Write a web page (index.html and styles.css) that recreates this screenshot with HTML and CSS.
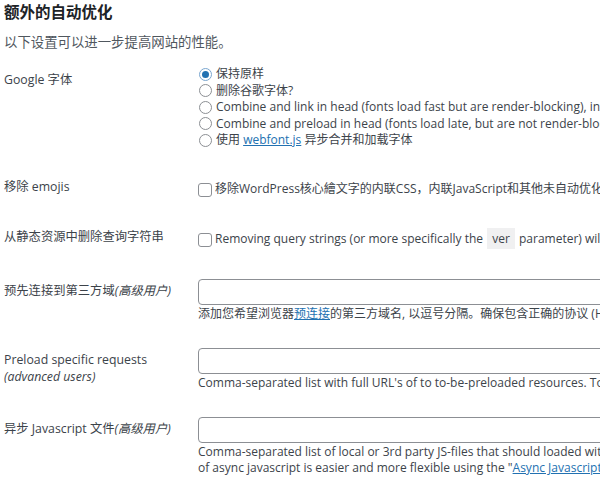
FILE: index.html
```html
<!DOCTYPE html>
<html lang="zh">
<head>
<meta charset="utf-8">
<title>额外的自动优化</title>
<link rel="stylesheet" href="styles.css">
</head>
<body>
<h2 class="title">额外的自动优化</h2>
<p class="intro">以下设置可以进一步提高网站的性能。</p>

<div class="row row-google">
  <div class="label label-offset">Google 字体</div>
  <div class="field">
    <label class="opt"><span class="radio checked"></span><span>保持原样</span></label>
    <label class="opt"><span class="radio"></span><span>删除谷歌字体?</span></label>
    <label class="opt"><span class="radio"></span><span>Combine and link in head (fonts load fast but are render-blocking), includes display:swap.</span></label>
    <label class="opt"><span class="radio"></span><span>Combine and preload in head (fonts load late, but are not render-blocking), includes display:swap.</span></label>
    <label class="opt"><span class="radio"></span><span>使用 <a href="#">webfont.js</a> 异步合并和加载字体</span></label>
  </div>
</div>

<div class="row row-emoji">
  <div class="label">移除 emojis</div>
  <div class="field">
    <label class="opt check-line"><span class="checkbox"></span><span>移除WordPress核心繪文字的内联CSS，内联JavaScript和其他未自动优化的JavaScript文件。</span></label>
  </div>
</div>

<div class="row row-query">
  <div class="label">从静态资源中删除查询字符串</div>
  <div class="field">
    <label class="opt check-line"><span class="checkbox"></span><span>Removing query strings (or more specifically the <code class="code">ver</code> parameter) will not improve load time, but might improve performance scores.</span></label>
  </div>
</div>

<div class="row row-preconnect">
  <div class="label label-input">预先连接到第三方域<em>(高级用户)</em></div>
  <div class="field">
    <div class="input"></div>
    <div class="desc">添加您希望浏览器<a href="#">预连接</a>的第三方域名, 以逗号分隔。确保包含正确的协议 (HTTP 或 HTTPS)。</div>
  </div>
</div>

<div class="row row-preload">
  <div class="label label-input">Preload specific requests<br><em>(advanced users)</em></div>
  <div class="field">
    <div class="input"></div>
    <div class="desc">Comma-separated list with full URL's of to to-be-preloaded resources. To be used sparingly!</div>
  </div>
</div>

<div class="row row-async">
  <div class="label label-input">异步 Javascript 文件<em>(高级用户)</em></div>
  <div class="field">
    <div class="input"></div>
    <div class="desc">Comma-separated list of local or 3rd party JS-files that should loaded with the <code>async</code> flag. JS-files from your own site will be automatically excluded if added here. Configuration<br>of async javascript is easier and more flexible using the "<a href="#">Async Javascript</a>" plugin.</div>
  </div>
</div>
</body>
</html>
```
FILE: styles.css
```css
html, body {
  margin: 0;
  padding: 0;
  background: #ffffff;
  overflow: hidden;
}
body {
  width: 592px;
  padding: 0 4px;
  font-family: "Open Sans", "Noto Sans CJK SC", sans-serif;
  font-size: 12px;
  color: #3c434a;
}
.title {
  margin: 0;
  padding-top: 2px;
  font-size: 15.5px;
  line-height: 20px;
  font-weight: 700;
  color: #1d2327;
}
.intro {
  margin: 11px 0 0;
  font-size: 13.4px;
  line-height: 18px;
  color: #50575e;
}
.row {
  display: flex;
  white-space: nowrap;
}
.label {
  width: 194px;
  flex: none;
  line-height: 16.5px;
  font-size: 12.3px;
  color: #3c434a;
}
.label em, .desc em { font-style: italic; }
.label-offset { padding-top: 6px; }
.label-input { padding-top: 4px; }
.field {
  flex: 1;
  min-width: 0;
  line-height: 16.5px;
}
.opt {
  display: flex;
  align-items: center;
  height: 16.5px;
}
.opt > span:last-child { white-space: pre; }
.check-line { height: 22px; }
.radio {
  flex: none;
  width: 13px;
  height: 13px;
  margin: 0 4px 0 1px;
  box-sizing: border-box;
  border: 1px solid #8c8f94;
  border-radius: 50%;
  display: flex;
  align-items: center;
  justify-content: center;
}
.radio.checked { border-color: #7aa6cf; }
.radio.checked::after {
  content: "";
  width: 7px;
  height: 7px;
  border-radius: 50%;
  background: #2271b1;
}
.checkbox {
  flex: none;
  width: 14px;
  height: 14px;
  margin-right: 3px;
  box-sizing: border-box;
  border: 1px solid #8c8f94;
  border-radius: 3px;
  background: #fff;
}
a { color: #2271b1; text-decoration: underline; }
.code {
  font-family: inherit;
  background: #f0f0f1;
  padding: 2px 5px;
  margin: 0 1px;
}
.row-google { margin-top: 15px; }
.row-emoji { margin-top: 30px; }
.row-query { margin-top: 28px; }
.row-preconnect { margin-top: 28px; }
.row-preload { margin-top: 26px; }
.row-async { margin-top: 25px; }
.input {
  width: 440px;
  height: 26px;
  box-sizing: border-box;
  border: 1px solid #8c8f94;
  border-radius: 4px;
  background: #fff;
}
.desc {
  margin-top: 1px;
  line-height: 16.5px;
  color: #3c434a;
}
```
